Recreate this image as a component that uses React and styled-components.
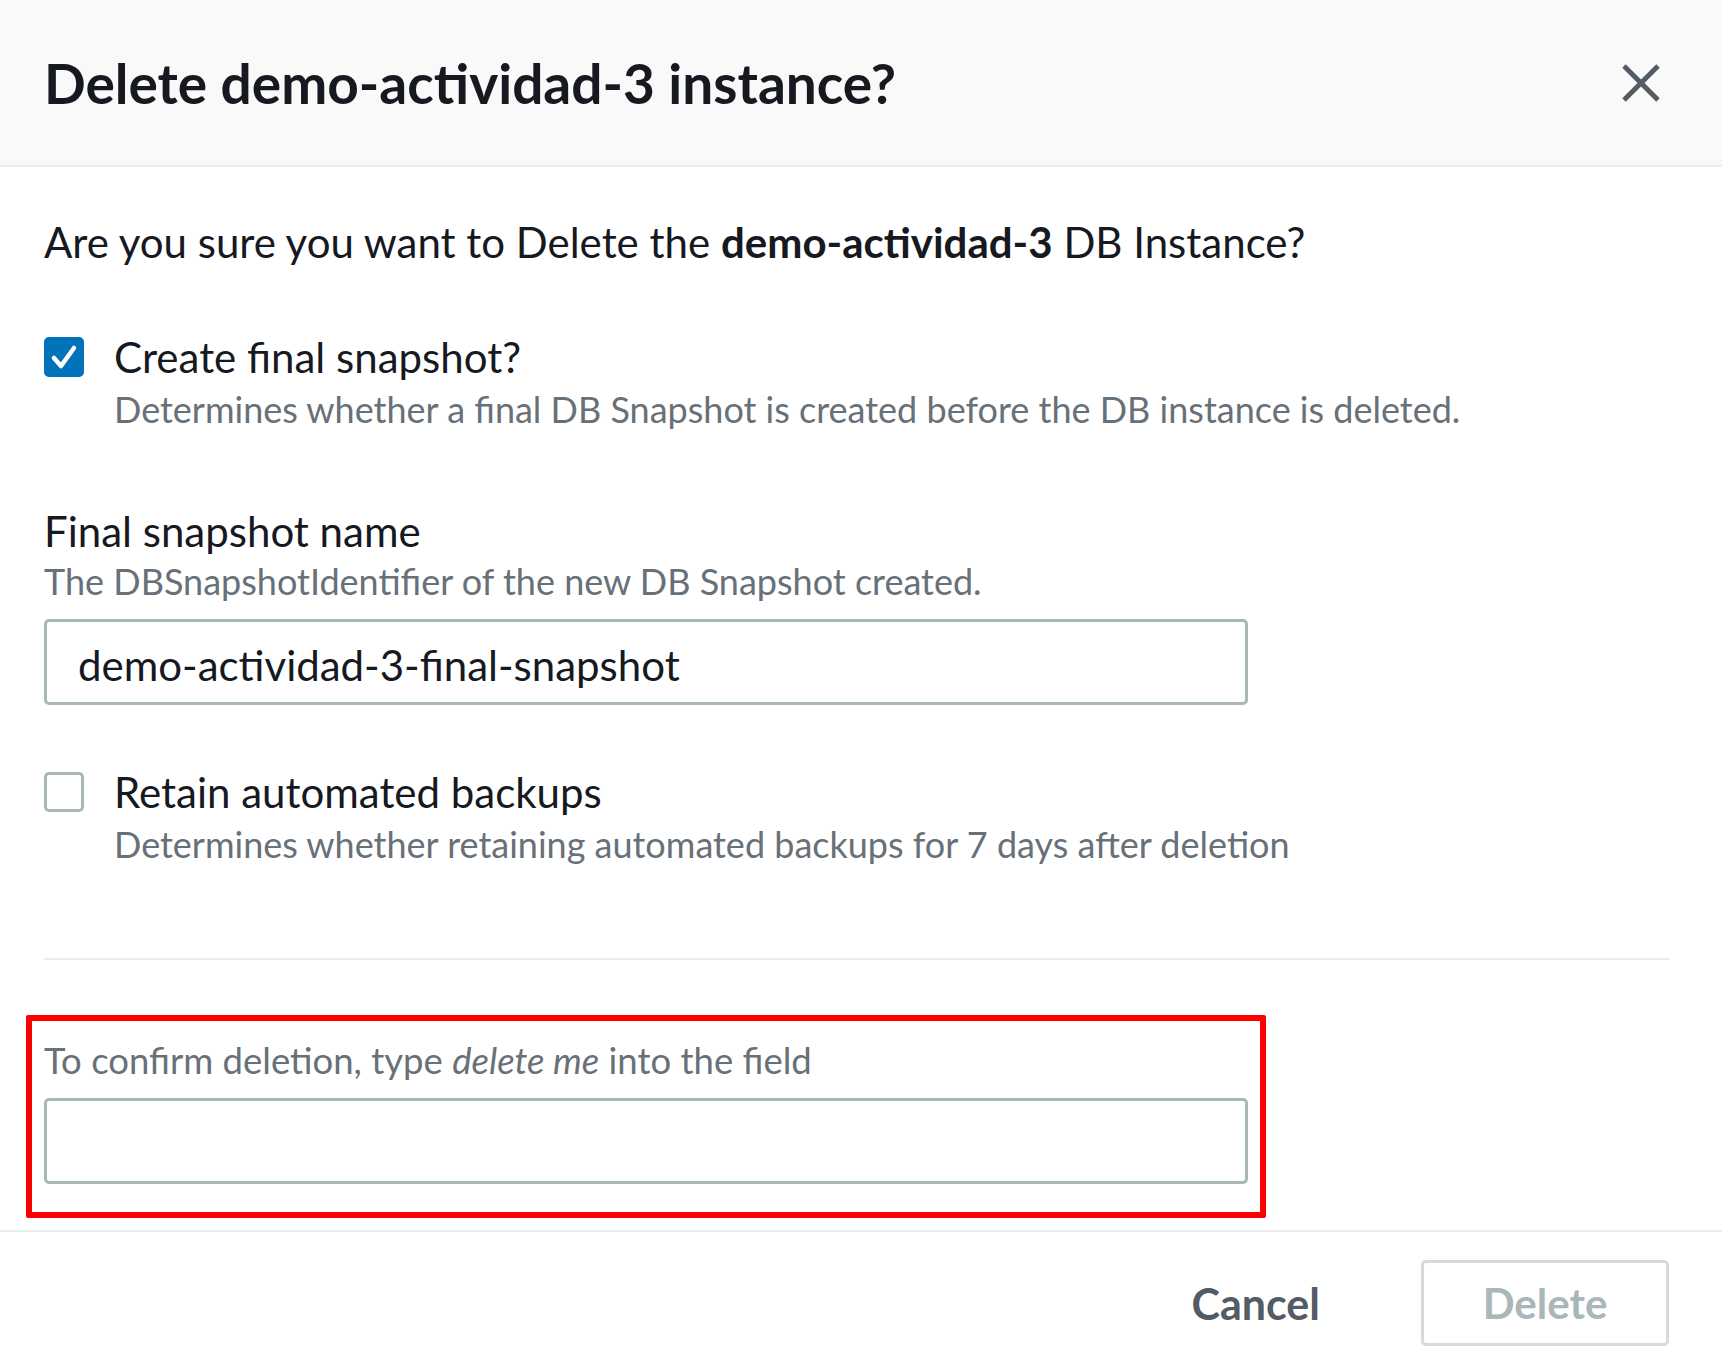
import React, { Component } from 'react';
import styled, { createGlobalStyle } from 'styled-components';

const GlobalStyle = createGlobalStyle`
    html, body {
        margin: 0;
        padding: 0;
        background: #ffffff;
    }
    body {
        font-family: Lato, "Liberation Sans", Arial, sans-serif;
        color: #16191f;
    }
    * {
        box-sizing: border-box;
    }
`;

class CheckField extends Component {
    render() {
        const { checked, label, description } = this.props;
        return (
            <CheckRow>
                <CheckBox checked={checked}>
                    {checked && (
                        <svg width="40" height="40" viewBox="0 0 40 40">
                            <polyline points="10,21 17,29 30,11" fill="none" stroke="#ffffff" strokeWidth="4.5" strokeLinecap="round" strokeLinejoin="round" />
                        </svg>
                    )}
                </CheckBox>
                <CheckText>
                    <CheckLabel>{label}</CheckLabel>
                    <Description>{description}</Description>
                </CheckText>
            </CheckRow>
        );
    }
}

class DeleteInstanceModal extends Component {
    constructor(props) {
        super(props);
        this.state = {
            snapshotName: 'demo-actividad-3-final-snapshot',
            confirm: '',
        };
    }

    render() {
        return (
            <Modal>
                <Header>
                    <Title>Delete demo-actividad-3 instance?</Title>
                    <CloseButton aria-label="Close">
                        <svg width="40" height="40" viewBox="0 0 40 40">
                            <line x1="3" y1="3" x2="37" y2="37" stroke="#545b64" strokeWidth="5" />
                            <line x1="37" y1="3" x2="3" y2="37" stroke="#545b64" strokeWidth="5" />
                        </svg>
                    </CloseButton>
                </Header>
                <Body>
                    <Intro>
                        Are you sure you want to Delete the <strong>demo-actividad-3</strong> DB Instance?
                    </Intro>
                    <CheckField
                        checked
                        label="Create final snapshot?"
                        description="Determines whether a final DB Snapshot is created before the DB instance is deleted."
                    />
                    <Field>
                        <FieldLabel>Final snapshot name</FieldLabel>
                        <Description>The DBSnapshotIdentifier of the new DB Snapshot created.</Description>
                        <TextInput
                            value={this.state.snapshotName}
                            onChange={(e) => this.setState({ snapshotName: e.target.value })}
                        />
                    </Field>
                    <CheckField
                        label="Retain automated backups"
                        description="Determines whether retaining automated backups for 7 days after deletion"
                    />
                    <Divider />
                    <ConfirmBox>
                        <ConfirmLabel>
                            To confirm deletion, type <em>delete me</em> into the field
                        </ConfirmLabel>
                        <TextInput
                            value={this.state.confirm}
                            onChange={(e) => this.setState({ confirm: e.target.value })}
                        />
                    </ConfirmBox>
                </Body>
                <Footer>
                    <CancelButton>Cancel</CancelButton>
                    <DeleteButton disabled>Delete</DeleteButton>
                </Footer>
            </Modal>
        );
    }
}

const Modal = styled.div`
    width: 1722px;
    background: #ffffff;
`;

const Header = styled.div`
    height: 167px;
    display: flex;
    align-items: center;
    justify-content: space-between;
    padding: 0 61px 0 44px;
    background: #f9f9f9;
    border-bottom: 2px solid #eaeded;
`;

const Title = styled.h1`
    margin: 0;
    font-size: 55px;
    font-weight: 700;
    line-height: 60px;
    color: #16191f;
`;

const CloseButton = styled.button`
    display: flex;
    padding: 0;
    border: none;
    background: transparent;
    cursor: pointer;
`;

const Body = styled.div`
    padding: 47px 53px 12px 44px;
`;

const Intro = styled.p`
    margin: 0 0 59px;
    font-size: 42px;
    line-height: 56px;
    strong {
        font-weight: 700;
    }
`;

const CheckRow = styled.div`
    display: flex;
    gap: 30px;
`;

const CheckBox = styled.div`
    flex-shrink: 0;
    width: 40px;
    height: 40px;
    margin-top: 8px;
    border-radius: 5px;
    background: ${(p) => (p.checked ? '#0073bb' : '#ffffff')};
    border: ${(p) => (p.checked ? 'none' : '3px solid #aab7b8')};
`;

const CheckText = styled.div`
    display: flex;
    flex-direction: column;
`;

const CheckLabel = styled.div`
    font-size: 42px;
    line-height: 56px;
`;

const Description = styled.div`
    font-size: 36px;
    line-height: 48px;
    color: #687078;
`;

const Field = styled.div`
    margin: 72px 0 59px;
    display: flex;
    flex-direction: column;
`;

const FieldLabel = styled.div`
    font-size: 42px;
    line-height: 52px;
`;

const TextInput = styled.input`
    width: 1204px;
    height: 86px;
    margin-top: 14px;
    padding: 6px 31px 0;
    border: 3px solid #aab7b8;
    border-radius: 5px;
    font-family: inherit;
    font-size: 42px;
    color: #16191f;
    outline: none;
`;

const Divider = styled.div`
    height: 2px;
    margin: 90px 0 55px;
    background: #eaeded;
`;

const ConfirmBox = styled.div`
    width: 1240px;
    margin-left: -18px;
    padding: 15px 12px 28px;
    border: 6px solid #fe0000;
    border-radius: 2px;
`;

const ConfirmLabel = styled.div`
    font-size: 36.5px;
    line-height: 48px;
    color: #687078;
    em {
        font-style: italic;
    }
`;

const Footer = styled.div`
    display: flex;
    justify-content: flex-end;
    align-items: center;
    gap: 61px;
    padding: 28px 53px 11px 0;
    border-top: 2px solid #eaeded;
`;

const CancelButton = styled.button`
    padding: 0 40px;
    border: none;
    background: transparent;
    font-family: inherit;
    font-size: 43px;
    font-weight: 700;
    color: #545b64;
    cursor: pointer;
`;

const DeleteButton = styled.button`
    width: 248px;
    height: 86px;
    border: 3px solid #d5dbdb;
    border-radius: 5px;
    background: #ffffff;
    font-family: inherit;
    font-size: 42px;
    font-weight: 700;
    color: #aab7b8;
`;

export default function App() {
    return (
        <>
            <GlobalStyle />
            <DeleteInstanceModal />
        </>
    );
}
